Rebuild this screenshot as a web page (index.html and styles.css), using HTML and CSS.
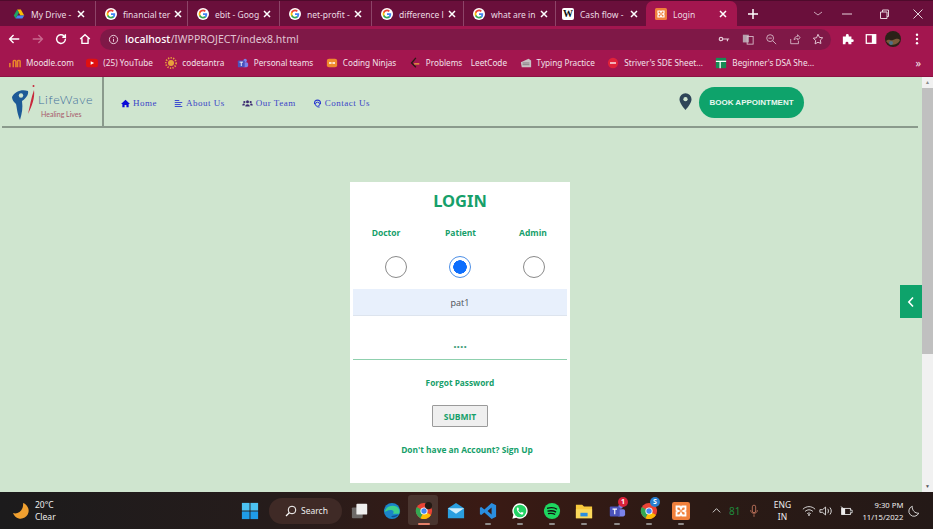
FILE: index.html
```html
<!DOCTYPE html>
<html lang="en">
<head>
<meta charset="utf-8">
<title>Login</title>
<link rel="stylesheet" href="styles.css">
</head>
<body>
<svg class="defs" width="0" height="0">
  <defs>
    <symbol id="g" viewBox="0 0 16 16">
      <circle cx="8" cy="8" r="8" fill="#fff"/>
      <path d="M13.6 8.2c0-.5 0-.9-.1-1.3H8v2.4h3.2c-.2.8-.6 1.4-1.2 1.8v1.5h1.9c1.1-1 1.7-2.5 1.7-4.4z" fill="#4285f4"/>
      <path d="M8 14c1.6 0 2.9-.5 3.9-1.4L10 11.1c-.5.4-1.2.6-2 .6-1.5 0-2.8-1-3.3-2.4h-2v1.5C3.7 12.8 5.7 14 8 14z" fill="#34a853"/>
      <path d="M4.700 9.300a3.700 3.700 0 0 1 0-2.500V5.300h-2a6 6 0 0 0 0 5.500z" fill="#fbbc05"/>
      <path d="M8 4.400c.9 0 1.600.3 2.200.9l1.700-1.700C10.900 2.600 9.600 2 8 2 5.700 2 3.700 3.300 2.700 5.300l2 1.500C5.200 5.400 6.500 4.400 8 4.400z" fill="#ea4335"/>
    </symbol>
    <symbol id="x" viewBox="0 0 10 10">
      <path d="M2 2l6 6M8 2l-6 6" stroke="#fff" stroke-width="1.500" fill="none"/>
    </symbol>
    <symbol id="xampp" viewBox="0 0 16 16">
      <rect width="16" height="16" rx="2" fill="#f0803c"/>
      <path d="M4 4h3l1 2 1-2h3v3l-2 1 2 1v3H9L8 10l-1 2H4V9l2-1-2-1z" fill="none" stroke="#fff" stroke-width="1.600"/>
    </symbol>
  </defs>
</svg>

<div class="tabstrip">
  <div class="tab sep">
    <svg class="fav" viewBox="0 0 16 16"><path d="M5.500 2h5L15 10h-5z" fill="#fbbc05"/><path d="M5.500 2L1 10l2.500 4L8 6z" fill="#1ea362"/><path d="M3.500 14h9l2.500-4H6z" fill="#4285f4"/></svg>
    <span class="tabtitle">My Drive -</span><svg class="close"><use href="#x"/></svg>
  </div>
  <div class="tab sep"><svg class="fav"><use href="#g"/></svg><span class="tabtitle">financial ter</span><svg class="close"><use href="#x"/></svg></div>
  <div class="tab sep"><svg class="fav"><use href="#g"/></svg><span class="tabtitle">ebit - Goog</span><svg class="close"><use href="#x"/></svg></div>
  <div class="tab sep"><svg class="fav"><use href="#g"/></svg><span class="tabtitle">net-profit -</span><svg class="close"><use href="#x"/></svg></div>
  <div class="tab sep"><svg class="fav"><use href="#g"/></svg><span class="tabtitle">difference l</span><svg class="close"><use href="#x"/></svg></div>
  <div class="tab sep"><svg class="fav"><use href="#g"/></svg><span class="tabtitle">what are in</span><svg class="close"><use href="#x"/></svg></div>
  <div class="tab wikitab"><span class="wiki">W</span><span class="tabtitle">Cash flow -</span><svg class="close"><use href="#x"/></svg></div>
  <div class="tab active"><svg class="fav"><use href="#xampp"/></svg><span class="tabtitle">Login</span><svg class="close"><use href="#x"/></svg></div>
  <svg class="newtab" viewBox="0 0 12 12"><path d="M6 1v10M1 6h10" stroke="#fff" stroke-width="1.500"/></svg>
  <div class="winctl">
    <svg class="w-chev" viewBox="0 0 12 12"><path d="M2 4l4 3 4-3" stroke="#c9a3b6" fill="none"/></svg>
    <svg class="w-min" viewBox="0 0 12 12"><path d="M1 6h10" stroke="#e6d3dc"/></svg>
    <svg class="w-max" viewBox="0 0 12 12"><path d="M2.500 4h6.500v6.500H2.500zM4.500 4V2h6v6.500H9" stroke="#e6d3dc" fill="none"/></svg>
    <svg viewBox="0 0 12 12"><path d="M1.500 1.500l9 9M10.500 1.500l-9 9" stroke="#e6d3dc"/></svg>
  </div>
</div>

<div class="toolbar">
  <svg class="tb" viewBox="0 0 16 16"><path d="M14 8H3M7.500 3.500L3 8l4.500 4.500" stroke="#fff" stroke-width="1.600" fill="none"/></svg>
  <svg class="tb" viewBox="0 0 16 16"><path d="M2 8h11M8.500 3.500L13 8l-4.500 4.500" stroke="#c9698f" stroke-width="1.600" fill="none"/></svg>
  <svg class="tb" viewBox="0 0 16 16"><path d="M13 8a5 5 0 1 1-1.500-3.500L13 6V2.500M13 6H9.500" stroke="#fff" stroke-width="1.600" fill="none"/></svg>
  <svg class="tb" viewBox="0 0 16 16"><path d="M2.500 8L8 3l5.500 5M4.500 7v6h7V7" stroke="#fff" stroke-width="1.600" fill="none"/></svg>
  <div class="omnibox">
    <svg class="info" viewBox="0 0 12 12"><circle cx="6" cy="6" r="4.500" stroke="#efdbe4" fill="none"/><path d="M6 5.500v3M6 3.500v1" stroke="#efdbe4"/></svg>
    <span class="url"><b>localhost</b><span class="urlrest">/IWPPROJECT/index8.html</span></span>
    <div class="omni-icons">
      <svg viewBox="0 0 14 14"><circle cx="3.500" cy="7" r="2" stroke="#e6cbd8" stroke-width="1.400" fill="none"/><path d="M5.500 7H13M11 7v2.500" stroke="#e6cbd8" stroke-width="1.400"/></svg>
      <svg viewBox="0 0 14 14"><rect x="1" y="2" width="7" height="9" fill="#b5a0ac"/><rect x="6" y="4" width="7" height="9" fill="none" stroke="#d9bfcc"/></svg>
      <svg viewBox="0 0 14 14"><circle cx="6" cy="6" r="4" stroke="#d9bfcc" fill="none"/><path d="M9 9l4 4M4 6h4" stroke="#d9bfcc"/></svg>
      <svg viewBox="0 0 14 14"><path d="M2 7v5.500h9V9M6 8c0-3 2-4 4-4V2l3 3.500L10 8V6.500C8 6.500 7 7 6 8z" stroke="#d9bfcc" fill="none"/></svg>
      <svg viewBox="0 0 14 14"><path d="M7 1.500l1.700 3.600 3.800.5-2.800 2.700.7 3.900L7 10.800l-3.400 1.900.7-3.900-2.800-2.700 3.800-.5z" stroke="#efdbe4" fill="none"/></svg>
    </div>
  </div>
  <svg class="ext" viewBox="0 0 14 14"><path d="M1 4h3.500V3a1.700 1.700 0 0 1 3.400 0v1H11v3.200h1a1.700 1.700 0 0 1 0 3.400h-1V13H7.500v-1a1.700 1.700 0 0 0-3.400 0v1H1z" fill="#fff"/></svg>
  <svg class="ext" viewBox="0 0 14 14"><rect x="1.500" y="2" width="11" height="10" fill="none" stroke="#fff" stroke-width="1.500"/><rect x="8" y="2" width="4.500" height="10" fill="#fff"/></svg>
  <svg class="avatar" viewBox="0 0 16 16"><circle cx="8" cy="8" r="8" fill="#2b2118"/><path d="M1 10c3-3 4 0 7-1s5-2 7 0a8 8 0 0 1-14 1z" fill="#7a5a3a"/><circle cx="6" cy="12" r="2" fill="#4d6f86"/></svg>
  <svg class="kebab" viewBox="0 0 4 14"><circle cx="2" cy="2" r="1.400" fill="#fff"/><circle cx="2" cy="7" r="1.400" fill="#fff"/><circle cx="2" cy="12" r="1.400" fill="#fff"/></svg>
</div>

<div class="bookmarks">
  <span class="bm"><svg class="bmi" viewBox="0 0 14 14"><path d="M1 12V7M5 12V5c0-1 3-1 3 0v7M10 12V5c0-1 3-1 3 0v7" stroke="#e8842c" stroke-width="1.800" fill="none"/></svg>Moodle.com</span>
  <span class="bm"><svg class="bmi" viewBox="0 0 14 14"><rect y="2" width="14" height="10" rx="3" fill="#e01010"/><path d="M5.500 5l4 2-4 2z" fill="#fff"/></svg>(25) YouTube</span>
  <span class="bm"><svg class="bmi" viewBox="0 0 14 14"><circle cx="7" cy="7" r="3.500" fill="#e8a03c"/><circle cx="7" cy="7" r="6" fill="none" stroke="#e8a03c" stroke-width="2" stroke-dasharray="1.500 1.500"/></svg>codetantra</span>
  <span class="bm"><svg class="bmi" viewBox="0 0 14 14"><circle cx="9.500" cy="4" r="2" fill="#7b83eb"/><rect x="6" y="6" width="7" height="6" rx="2" fill="#7b83eb"/><rect x="1" y="4" width="8" height="8" rx="1" fill="#4b53bc"/><path d="M3 6h4M5 6v4.500" stroke="#fff"/></svg>Personal teams</span>
  <span class="bm"><svg class="bmi" viewBox="0 0 14 14"><rect x="1" y="2" width="12" height="10" rx="2.500" fill="#f08a2c"/><path d="M3.500 6h3v2h-3zM7.500 6h3v2h-3z" fill="#fff"/></svg>Coding Ninjas</span>
  <span class="bm"><svg class="bmi" viewBox="0 0 14 14"><path d="M8 1L3 7l5 5" stroke="#2b1a14" stroke-width="1.600" fill="none"/><path d="M6 8h6" stroke="#e8a03c" stroke-width="1.600"/></svg>Problems</span>
  <span class="bm plain">LeetCode</span>
  <span class="bm"><svg class="bmi" viewBox="0 0 14 14"><path d="M1 6l9-4 3 2v8H2z" fill="#c9c1c4"/><path d="M3 7h8M3 9h8" stroke="#7d7478"/></svg>Typing Practice</span>
  <span class="bm"><svg class="bmi" viewBox="0 0 14 14"><circle cx="7" cy="7" r="6" fill="#e0223a"/><path d="M3.500 7h7" stroke="#fff" stroke-width="1.500"/></svg>Striver's SDE Sheet...</span>
  <span class="bm"><svg class="bmi" viewBox="0 0 14 14"><rect x="1" y="1" width="12" height="12" fill="#178a54"/><path d="M1 5h12M6 5v8" stroke="#fff" stroke-width="1.500"/></svg>Beginner's DSA She...</span>
  <span class="more">»</span>
</div>

<div class="viewport">
  <div class="page">
    <header class="site-nav">
      <div class="logo">
        <svg class="logomark" viewBox="0 0 26 38">
          <path d="M1 13C4 7 11 5 17 7c1 4-3 8-6 10 1 7 0 12-2 19C6 29 6 24 5 20 3 18 1 16 1 13z" fill="#1d5a97"/>
          <circle cx="10" cy="11.500" r="2.200" fill="#cfe5cf"/>
          <path d="M23 6c1 8-2 16-6 24 2-8 3-16 6-24z" fill="#c8283c"/>
          <circle cx="22.500" cy="2" r="1" fill="#c8283c"/>
        </svg>
        <div class="logotext">
          <span class="brand">LifeWave</span>
          <span class="tagline">Healing Lives</span>
        </div>
      </div>
      <nav class="menu">
        <a class="menu-item"><svg class="mi" viewBox="0 0 12 12"><path d="M6 1L0 6.500h1.800V11h3V8h2.400v3h3V6.500H12z" fill="#0a0ad8"/></svg>Home</a>
        <a class="menu-item"><svg class="mi" viewBox="0 0 12 12"><path d="M1 2h6M1 4.700h10M1 7.400h8M1 10h10" stroke="#2a3ad0" stroke-width="1.200"/></svg>About Us</a>
        <a class="menu-item"><svg class="mi wide" viewBox="0 0 14 12"><circle cx="7" cy="3.500" r="2" fill="#3a2a70"/><circle cx="2.800" cy="4" r="1.500" fill="#3a2a70"/><circle cx="11.200" cy="4" r="1.500" fill="#3a2a70"/><path d="M4 10c0-4 6-4 6 0zM0 8.500c0-3 3.500-3 3.500-1.500L3 8.500zM14 8.500c0-3-3.500-3-3.500-1.500l.5 1.500z" fill="#3a2a70"/></svg>Our Team</a>
        <a class="menu-item"><svg class="mi" viewBox="0 0 12 12"><path d="M2 7V5.500a4 4 0 0 1 8 0V7" stroke="#2a3ad0" stroke-width="1.400" fill="none"/><circle cx="6" cy="7" r="2.800" fill="none" stroke="#2a3ad0" stroke-width="1.300"/><path d="M6 10.800h3" stroke="#2a3ad0"/></svg>Contact Us</a>
      </nav>
      <svg class="pin" viewBox="0 0 14 18"><path d="M7 0a6.500 6.500 0 0 0-6.500 6.500C.5 11 7 18 7 18s6.500-7 6.500-11.500A6.500 6.500 0 0 0 7 0z" fill="#2e4558"/><circle cx="7" cy="6.500" r="2.300" fill="#cfe5cf"/></svg>
      <a class="book">BOOK APPOINTMENT</a>
    </header>

    <form class="card">
      <h1 class="login-title">LOGIN</h1>
      <div class="roles">
        <div class="role"><span class="role-label">Doctor</span><span class="radio"></span></div>
        <div class="role"><span class="role-label">Patient</span><span class="radio checked"></span></div>
        <div class="role"><span class="role-label">Admin</span><span class="radio"></span></div>
      </div>
      <div class="field filled">pat1</div>
      <div class="field password">....</div>
      <a class="forgot">Forgot Password</a>
      <button class="submit" type="button">SUBMIT</button>
      <a class="signup">Don't have an Account? Sign Up</a>
    </form>

    <div class="side-tab">
      <svg viewBox="0 0 8 12"><path d="M6 1.500L1.800 6 6 10.500" stroke="#fff" stroke-width="1.600" fill="none"/></svg>
    </div>
  </div>
  <div class="scrollbar">
    <span class="arrow">▲</span>
    <span class="thumb"></span>
    <span class="arrow down">▼</span>
  </div>
</div>

<footer class="taskbar">
  <div class="weather">
    <svg class="moon" viewBox="0 0 18 18"><path d="M11 1a8 8 0 1 1-10 10c5 2 11-3 10-10z" fill="#f0a030"/></svg>
    <div class="weather-text"><span>20°C</span><span>Clear</span></div>
  </div>
  <div class="apps">
    <svg class="app" viewBox="0 0 20 20"><rect x="1" y="1" width="8.500" height="8.500" fill="#4cc2f1"/><rect x="10.500" y="1" width="8.500" height="8.500" fill="#4cc2f1"/><rect x="1" y="10.500" width="8.500" height="8.500" fill="#1f9ce8"/><rect x="10.500" y="10.500" width="8.500" height="8.500" fill="#1f9ce8"/></svg>
    <div class="search"><svg viewBox="0 0 12 12"><circle cx="7" cy="5" r="3.800" stroke="#fff" fill="none"/><path d="M4.300 7.800L1 11" stroke="#fff" stroke-width="1.200"/></svg>Search</div>
    <svg class="app" viewBox="0 0 20 20"><rect x="1" y="6" width="12" height="12" rx="1" fill="#6d6a68"/><rect x="6" y="2" width="12" height="12" rx="1" fill="#efefef"/></svg>
    <svg class="app" viewBox="0 0 20 20"><circle cx="10" cy="10" r="9" fill="#1a84c8"/><path d="M2 11C3 5 10 3 15 5c3 2 4 5 3 8h-7c2-2 0-5-3-4-3 0-5 2-6 2z" fill="#3dd08c"/><path d="M9 16c2 2 6 1 8-2-3 1-6 1-8 2z" fill="#0d4f94"/></svg>
    <div class="appcell current"><svg class="app" viewBox="0 0 20 20"><circle cx="10" cy="10" r="9" fill="#ea4335"/><path d="M10 10L17.800 14.500A9 9 0 0 1 6 18z" fill="#fbbc05"/><path d="M10 10L6 18A9 9 0 0 1 2 5.500z" fill="#34a853"/><circle cx="10" cy="10" r="4" fill="#fff"/><circle cx="10" cy="10" r="3" fill="#4285f4"/><circle cx="15" cy="4" r="4" fill="#241a14"/></svg></div>
    <svg class="app" viewBox="0 0 20 20"><path d="M1 7l9-6 9 6v11H1z" fill="#2a9fe0"/><path d="M1 7l9 6 9-6" fill="#cfeefc"/></svg>
    <div class="appcell running"><svg class="app" viewBox="0 0 20 20"><path d="M14 1l5 2.500v13L14 19 6 11.800 2.500 14.500 1 13.500V6.500l1.500-1L6 8.200zM14 6l-4.500 4 4.500 4z" fill="#2a8ee0"/></svg></div>
    <div class="appcell running"><svg class="app" viewBox="0 0 20 20"><path d="M10 1.500a8.500 8.500 0 0 0-7.300 12.800L1.500 18.500l4.300-1.100A8.500 8.500 0 1 0 10 1.500z" fill="#fff"/><circle cx="10" cy="10" r="7" fill="#25d366"/><path d="M7 6c-2 2 2 8 6 8l1-2-2-1-1 1c-1 0-3-2-3-3l1-1-1-2z" fill="#fff"/></svg></div>
    <div class="appcell running"><svg class="app" viewBox="0 0 20 20"><circle cx="10" cy="10" r="9" fill="#1ed760"/><path d="M4.500 7c4-1 8-1 11 1M5 10.200c3.500-.8 7-.5 9.500 1M5.500 13c3-.6 6-.4 8 .9" stroke="#111" stroke-width="1.500" fill="none"/></svg></div>
    <div class="appcell running"><svg class="app" viewBox="0 0 20 20"><path d="M1 3h7l2 2h9v13H1z" fill="#f8c93c"/><rect x="1" y="8" width="18" height="10" fill="#fbd95c"/><rect x="6" y="12" width="8" height="4" fill="#2a8ee0"/></svg></div>
    <div class="appcell running teams"><svg class="app" viewBox="0 0 20 20"><circle cx="14" cy="5" r="2.500" fill="#7b83eb"/><rect x="10" y="8" width="9" height="8" rx="2" fill="#7b83eb"/><rect x="2" y="5" width="11" height="11" rx="1" fill="#4b53bc"/><path d="M5 8h5M7.500 8v5.500" stroke="#fff" stroke-width="1.300"/></svg><span class="badge red">1</span></div>
    <div class="appcell running"><svg class="app" viewBox="0 0 20 20"><circle cx="10" cy="10" r="9" fill="#ea4335"/><path d="M10 10L17.800 14.500A9 9 0 0 1 6 18z" fill="#fbbc05"/><path d="M10 10L6 18A9 9 0 0 1 2 5.500z" fill="#34a853"/><circle cx="10" cy="10" r="4" fill="#fff"/><circle cx="10" cy="10" r="3" fill="#4285f4"/></svg><span class="badge blue">S</span></div>
    <div class="appcell running"><svg class="app" viewBox="0 0 16 16"><use href="#xampp"/></svg></div>
  </div>
  <div class="tray">
    <svg class="t1" viewBox="0 0 12 12"><path d="M2 8l4-4 4 4" stroke="#ddd" fill="none"/></svg>
    <span class="cnt">81</span>
    <svg class="t2" viewBox="0 0 12 16"><rect x="4" y="1" width="4" height="9" rx="2" fill="none" stroke="#c87860"/><path d="M2 7c0 5 8 5 8 0M6 12v3" stroke="#c87860" fill="none"/></svg>
    <span class="lang">ENG<br>IN</span>
    <svg class="t3" viewBox="0 0 16 12"><path d="M1 4c4-4 10-4 14 0M3.500 6.500c3-2.500 6-2.500 9 0M6 9c1-1 3-1 4 0" stroke="#eee" fill="none"/><circle cx="8" cy="10.500" r="1" fill="#eee"/></svg>
    <svg class="t3" viewBox="0 0 16 12"><path d="M1 4.500h3L7.500 1.500v9L4 7.500H1zM10 3.500c1 1.500 1 3.500 0 5M12.500 2c2 2.500 2 5.500 0 8" stroke="#eee" fill="none"/></svg>
    <svg class="t4" viewBox="0 0 16 12"><rect x="3" y="3" width="10" height="7" fill="none" stroke="#eee"/><rect x="3" y="3" width="4" height="7" fill="#eee"/><path d="M13 5h2v3h-2M2 1l3 2" stroke="#eee"/></svg>
    <span class="clock"><span>9:30 PM</span><span>11/15/2022</span></span>
    <svg class="t5" viewBox="0 0 14 14"><path d="M5 1.500a6 6 0 1 0 7.500 8C8 10 4.500 6 5 1.500z" stroke="#eee" fill="none"/></svg>
  </div>
</footer>
</body>
</html>
```

FILE: styles.css
```css
* { box-sizing: border-box; }
html, body { height: 100%; }
body {
  margin: 0;
  display: flex;
  flex-direction: column;
  height: 529px;
  overflow: hidden;
  font-family: "Liberation Sans", Arial, sans-serif;
  background: #cfe5cf;
}
.defs { display: block; height: 0; }

/* browser chrome */
.tabstrip {
  height: 26px;
  flex: none;
  display: flex;
  align-items: flex-end;
  padding-left: 4px;
  background: #6a0f3b;
  border-top: 1px solid #4e0a2b;
}
.tab {
  width: 92px;
  height: 25px;
  flex: none;
  display: flex;
  align-items: center;
  padding: 1px 9px 0;
  color: #ecdbe3;
  font: 8.500px "Noto Sans", "Open Sans", sans-serif;
  position: relative;
}
.tab.sep { border-right: 1px solid #8d4468; }
.tab.wikitab { padding-left: 6px; }
.tab.active {
  width: 91px;
  margin-left: -2px;
  background: #a3164f;
  border-radius: 7px 7px 0 0;
}
.fav { width: 12px; height: 12px; flex: none; }
.wiki {
  width: 12px;
  height: 12px;
  flex: none;
  background: #fff;
  color: #111;
  font: 700 10px/12px "Liberation Serif", serif;
  text-align: center;
  border-radius: 2px;
}
.tabtitle {
  flex: 1;
  margin-left: 6px;
  white-space: nowrap;
}
.close { width: 10px; height: 10px; flex: none; margin-left: 3px; }
.newtab { width: 12px; height: 12px; margin: 0 0 6px 10px; flex: none; }
.winctl {
  margin-left: auto;
  display: flex;
  align-self: center;
  padding-right: 9px;
}
.winctl svg { width: 12px; height: 12px; }
.winctl .w-chev { margin-right: 17px; }
.winctl .w-min { margin-right: 25px; }
.winctl .w-max { margin-right: 22px; }

.toolbar {
  height: 26px;
  flex: none;
  display: flex;
  align-items: center;
  padding: 0 9px 0 7px;
  background: #a3164f;
}
.tb { width: 14px; height: 14px; flex: none; margin-right: 9.500px; }
.omnibox {
  width: 731px;
  height: 21px;
  flex: none;
  display: flex;
  align-items: center;
  margin-left: -1px;
  padding: 0 7px 0 8px;
  border-radius: 11px;
  background: #7f1847;
}
.info { width: 11px; height: 11px; flex: none; }
.url { margin-left: 6px; font: 10.500px "Noto Sans", "Open Sans", sans-serif; color: #fff; }
.url b { font-weight: 500; }
.urlrest { color: #e0c4d2; }
.omni-icons { margin-left: auto; display: flex; gap: 11.500px; }
.omni-icons svg { width: 12px; height: 12px; }
.ext { width: 12px; height: 12px; flex: none; margin-left: 11px; }
.avatar { width: 16px; height: 16px; flex: none; margin-left: 8px; }
.kebab { width: 4px; height: 12px; flex: none; margin-left: 14px; }

.bookmarks {
  height: 25px;
  flex: none;
  display: flex;
  align-items: center;
  padding: 0 12px 3px 9px;
  gap: 12.500px;
  background: #a3164f;
  border-bottom: 1px solid #8d1243;
  color: #f2e2ea;
  font: 8.200px "Noto Sans", "Open Sans", sans-serif;
}
.bm { display: flex; align-items: center; white-space: nowrap; }
.bm.plain { margin-left: -4px; }
.bmi { width: 12px; height: 12px; margin-right: 5px; flex: none; }
.more { margin-left: auto; font-size: 11px; }

/* page */
.viewport { height: 415px; flex: none; display: flex; }
.page { flex: 1; position: relative; background: #cfe5cf; overflow: hidden; }
.site-nav {
  height: 51px;
  display: flex;
  align-items: center;
  margin: 0 4px 0 2px;
  border-bottom: 2px solid #8a9a8c;
}
.logo {
  width: 102px;
  height: 49px;
  flex: none;
  display: flex;
  align-items: center;
  padding-left: 9px;
  border-right: 2px solid #8a9a8c;
}
.logomark { width: 26px; height: 38px; flex: none; margin-top: 2px; }
.logotext { display: flex; flex-direction: column; align-items: flex-start; margin: 9px 0 0 1px; }
.brand { font: 300 12.500px Lato, "Noto Sans", sans-serif; letter-spacing: .7px; color: #44709c; line-height: 14px; }
.tagline { font: 7px Lato, "Noto Sans", sans-serif; color: #a85a6a; line-height: 10px; margin: 2px 0 0 3px; }
.menu { display: flex; gap: 17px; margin: 3px 0 0 17px; }
.menu-item {
  display: flex;
  align-items: center;
  font: 9px "Liberation Serif", serif;
  letter-spacing: .5px;
  color: #3a44c8;
}
.mi { width: 9px; height: 9px; margin-right: 3px; flex: none; }
.mi.wide { width: 11px; }
.pin { width: 13px; height: 17px; margin-left: auto; flex: none; margin-right: 7px; margin-top: -1px; }
.book {
  width: 105px;
  height: 31px;
  flex: none;
  margin-right: 114px;
  margin-top: 2px;
  display: flex;
  align-items: center;
  justify-content: center;
  border-radius: 16px;
  background: #0ea36b;
  color: #e9f7f0;
  font-size: 8px;
  font-weight: 700;
}

.card {
  width: 220px;
  height: 301px;
  margin: 54px 0 0 350px;
  padding: 7px 3px 0;
  display: flex;
  flex-direction: column;
  align-items: center;
  background: #fff;
  color: #16a06a;
  font-family: "Open Sans", "Noto Sans", sans-serif;
}
.login-title {
  margin: 0;
  font-size: 16.500px;
  line-height: 23px;
  font-weight: 700;
  font-family: "Noto Sans", sans-serif;
}
.roles {
  display: flex;
  justify-content: space-between;
  width: 100%;
  margin-top: 15px;
  padding: 0 13px 0 12px;
}
.role { display: flex; flex-direction: column; align-items: center; width: 42px; }
.role-label { font-size: 8.500px; line-height: 12px; font-weight: 700; }
.role:nth-child(2) .role-label { margin-left: 2px; }
.radio {
  width: 22px;
  height: 22px;
  margin-top: 17px;
  border-radius: 50%;
  border: 1px solid #8a8a8a;
  background: #fff;
}
.role:first-child .radio { margin-left: 20px; }
.role:last-child .radio { margin-left: 2px; }
.radio.checked {
  border-color: #4d8fe6;
  background: radial-gradient(circle, #0d6efd 0 6.500px, #fff 7px);
}
.field {
  width: 214px;
  flex: none;
  text-align: center;
  font-size: 9px;
}
.filled {
  height: 27px;
  line-height: 27px;
  margin-top: 11px;
  background: #e8f0fc;
  border-bottom: 1px solid #dde4ee;
  color: #4a4f55;
}
.password {
  height: 44px;
  padding-top: 21px;
  line-height: 14px;
  font-size: 12px;
  font-weight: 700;
  border-bottom: 1px solid #8fd0ae;
  color: #3d9d79;
}
.forgot { margin-top: 17px; font-size: 8.300px; line-height: 12px; font-weight: 700; }
.submit {
  width: 56px;
  height: 22px;
  margin-top: 16px;
  padding: 0;
  border: 1px solid #9a9a9a;
  border-radius: 1px;
  background: #efefef;
  color: #16a06a;
  font: 700 8.500px "Open Sans", sans-serif;
}
.signup { margin: 17px 0 0 14px; font-size: 8.400px; line-height: 12px; font-weight: 700; }

.side-tab {
  position: absolute;
  top: 208px;
  right: 0;
  width: 22px;
  height: 33px;
  display: flex;
  align-items: center;
  justify-content: center;
  background: #0ea36b;
}
.side-tab svg { width: 8px; height: 12px; }

.scrollbar {
  width: 11px;
  flex: none;
  display: flex;
  flex-direction: column;
  background: #f1f1f1;
}
.arrow { height: 11px; font-size: 5px; line-height: 11px; text-align: center; color: #8a8a8a; }
.arrow.down { margin-top: auto; color: #555; }
.thumb { height: 266px; background: #c0c0c0; }

/* taskbar */
.taskbar {
  height: 37px;
  flex: none;
  display: flex;
  align-items: center;
  padding: 0 11px 0 12px;
  background: linear-gradient(90deg, #1c1b1c 0%, #261c1b 30%, #3a1a14 52%, #2b1a15 75%, #241917 100%);
  color: #eee;
  font: 8.500px "Noto Sans", "Open Sans", sans-serif;
}
.weather { display: flex; align-items: center; width: 229px; flex: none; }
.moon { width: 18px; height: 18px; flex: none; }
.weather-text { display: flex; flex-direction: column; margin-left: 5px; line-height: 12px; }
.apps { display: flex; align-items: center; flex: none; }
.app { width: 18px; height: 18px; flex: none; margin-right: 14px; display: block; }
.search {
  width: 73px;
  height: 26px;
  margin: 0 9px 0 -4px;
  padding-left: 16px;
  flex: none;
  display: flex;
  align-items: center;
  gap: 4px;
  border-radius: 13px;
  background: #3f2a26;
}
.search svg { width: 12px; height: 12px; }
.appcell { position: relative; }
.appcell.teams { margin-left: 1px; }
.appcell.current::before {
  content: "";
  position: absolute;
  left: -7px;
  top: -7px;
  width: 30px;
  height: 30px;
  border-radius: 3px;
  background: #4a352f;
}
.appcell.current::after,
.appcell.running::after {
  content: "";
  position: absolute;
  top: 21px;
  left: 6px;
  width: 6px;
  height: 2px;
  border-radius: 1px;
  background: #8f8a88;
}
.appcell.current::after { left: 3px; width: 12px; background: #e5806a; }
.appcell.current .app { position: relative; }
.badge {
  position: absolute;
  top: -5px;
  left: 10px;
  width: 10px;
  height: 10px;
  border-radius: 50%;
  font-size: 7px;
  line-height: 10px;
  font-weight: 700;
  text-align: center;
  color: #fff;
}
.badge.red { background: #d9233a; }
.badge.blue { background: #2a7fd0; }
.tray { display: flex; align-items: center; flex: none; margin-left: 7px; }
.t1 { width: 11px; height: 11px; flex: none; }
.cnt { margin-left: 7px; color: #1f8a3c; font-size: 10px; }
.t2 { width: 10px; height: 14px; margin-left: 9px; flex: none; }
.lang { margin-left: 12px; width: 22px; text-align: center; line-height: 12px; }
.t3 { width: 14px; height: 12px; margin-left: 9px; flex: none; }
.t3 + .t3 { margin-left: 3px; }
.t4 { width: 14px; height: 12px; margin-left: 6px; flex: none; }
.clock { margin-left: 9px; display: flex; flex-direction: column; align-items: flex-end; line-height: 12px; font-size: 7.700px; }
.t5 { width: 12px; height: 12px; margin-left: 5px; flex: none; }
```
